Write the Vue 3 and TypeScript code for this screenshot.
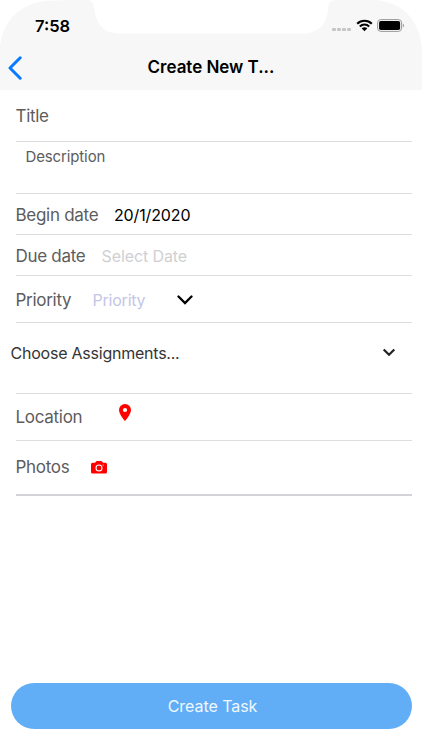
<script setup lang="ts">
import { ref } from 'vue'

const title = ref('Title')
const beginDate = ref('20/1/2020')
const signalDots = [0, 1, 2, 3]
</script>

<template>
  <main class="screen">
    <header class="header">
      <svg class="header-shape" viewBox="0 0 422 90" aria-hidden="true">
        <path d="M0 90V48C2 22 19 4 45 1C58 0 72 0 88 0C92 0 93 3 94 8C96 24 104 33.5 119 33.5H303C318 33.5 327 24 328 9C328 3 330 0 336 0H373C401 1 419 18 422 48V90Z" fill="#f7f7f7" />
      </svg>
      <div class="status">
        <span class="time">7:58</span>
        <div class="indicators">
          <div class="dots"><i v-for="dot in signalDots" :key="dot" /></div>
          <svg class="wifi" width="17" height="13" viewBox="0 0 17 13">
            <path d="M1.2 4.7C5.2.8 11.8.8 15.8 4.7M3.8 7.4C6.5 4.9 10.5 4.9 13.2 7.4" fill="none" stroke="#000" stroke-width="2.1" />
            <path d="M5.6 9.3C7.3 7.8 9.7 7.8 11.4 9.3L8.5 12.3Z" />
          </svg>
          <svg class="battery" width="28" height="13" viewBox="0 0 28 13">
            <rect x=".6" y=".6" width="24" height="11.8" rx="3.2" fill="#f7f7f7" stroke="#999" stroke-width="1" />
            <rect x="2.1" y="2.1" width="21" height="8.8" rx="1.7" />
            <path d="M25.9 4.5Q28.2 6.5 25.9 8.5Z" fill="#999" />
          </svg>
        </div>
      </div>
      <nav class="nav">
        <button class="back" aria-label="Back">
          <svg width="14" height="24" viewBox="0 0 14 24"><path d="M12.2 1.8 2 12 12.2 22.2" fill="none" stroke="#087aff" stroke-width="3" stroke-linecap="round" stroke-linejoin="round" /></svg>
        </button>
        <h1>Create New T...</h1>
      </nav>
    </header>

    <form class="form" @submit.prevent>
      <div class="row title-row"><label>{{ title }}</label></div>
      <div class="row description-row"><label class="description">Description</label></div>
      <div class="row date-row"><label class="begin">Begin date</label><span class="date">{{ beginDate }}</span></div>
      <div class="row date-row"><label class="due">Due date</label><span class="placeholder">Select Date</span></div>
      <div class="row priority-row">
        <label class="priority-label">Priority</label><span class="priority">Priority</span>
        <svg class="chevron" width="16" height="10" viewBox="0 0 16 10"><path d="M1.5 1.5 8 8 14.5 1.5" fill="none" stroke="#000" stroke-width="2.3" stroke-linecap="round" /></svg>
      </div>
      <div class="row assignments-row">
        <span class="assignments">Choose Assignments...</span>
        <svg width="14" height="9" viewBox="0 0 14 9"><path d="M1.7 1.5 7 6.8 12.3 1.5" fill="none" stroke="#222" stroke-width="2.2" /></svg>
      </div>
      <div class="row location-row">
        <label class="location">Location</label>
        <svg class="pin" width="12" height="17" viewBox="0 0 12 17"><path fill="#f00" fill-rule="evenodd" d="M6 0a6 6 0 0 0-6 6C0 10.4 6 17 6 17S12 10.4 12 6A6 6 0 0 0 6 0Zm0 3.9A2.1 2.1 0 1 1 6 8.1 2.1 2.1 0 0 1 6 3.9Z" /></svg>
      </div>
      <div class="row photos-row">
        <label class="photos">Photos</label>
        <svg width="16" height="13" viewBox="0 0 16 13">
          <path fill="#f00" d="M1.5 1.7H4L5 .5Q5.3.1 5.8.1H10.2Q10.7.1 11 .5L12 1.7H14.5Q16 1.7 16 3.2V11Q16 12.5 14.5 12.5H1.5Q0 12.5 0 11V3.2Q0 1.7 1.5 1.7Z" />
          <circle cx="8" cy="7" r="3" fill="none" stroke="#fff" stroke-width="1.1" /><circle cx="12.1" cy="4" r=".6" fill="#fff" />
        </svg>
      </div>
    </form>
    <button class="create">Create Task</button>
  </main>
</template>

<style>
body { margin: 0; background: #fff; }
</style>

<style scoped>
.screen { width: 422px; height: 750px; box-sizing: border-box; padding-bottom: 21px; display: flex; flex-direction: column; overflow: hidden; background: #fff; font-family: Inter, "Liberation Sans", sans-serif; font-size: 17px; line-height: 22px; color: #000; }
.header { position: relative; height: 90px; flex: none; }
.header-shape { position: absolute; inset: 0; width: 422px; height: 90px; }
.status { position: relative; height: 45px; box-sizing: border-box; padding: 6px 17px 0 35px; display: flex; align-items: center; justify-content: space-between; }
.time { font-size: 16.5px; font-weight: 600; }
.indicators { display: flex; align-items: center; }
.dots { display: flex; gap: 1.3px; margin: 8px 5px 0 0; }
.dots i { width: 3.8px; height: 3.8px; border-radius: 1px; background: #c6c6c6; }
.wifi { margin-right: 4px; }
.nav { position: relative; height: 45px; display: flex; align-items: center; }
.back { width: 40px; height: 24px; border: 0; padding: 0 0 0 8px; background: none; text-align: left; line-height: 0; }
h1 { margin: 0 40px 1px 0; flex: 1; font-size: 17px; font-weight: 600; text-align: center; letter-spacing: -.03px; }
.form { padding: 0 10.5px 0 15.5px; }
.row { display: flex; align-items: center; box-sizing: border-box; border-bottom: 1px solid #dedee1; white-space: nowrap; }
label { color: #5c5c5e; flex: none; letter-spacing: -.29px; }
.title-row { height: 52px; }
.description-row { height: 52px; padding: 4px 0 0 10px; align-items: flex-start; }
.description { font-size: 15px; letter-spacing: -.13px; }
.date-row { height: 41px; padding-top: 1px; }
.begin { width: 98.5px; }
.date { font-size: 16px; letter-spacing: -.14px; }
.due { width: 86px; }
.placeholder { font-size: 16px; letter-spacing: -.1px; color: #d0d0d2; }
.priority-row { height: 47px; padding-top: 1px; }
.priority-label { width: 77px; }
.priority { width: 84.5px; font-size: 16px; letter-spacing: -.22px; color: #c4c6e5; }
.assignments-row { height: 71px; padding: 0 15.5px 11px 0; justify-content: space-between; }
.assignments { margin-left: -5px; color: #353535; font-size: 16px; letter-spacing: -.23px; }
.location-row { height: 47px; }
.location { width: 103px; }
.pin { margin-bottom: 9px; }
.photos-row { height: 55px; padding-bottom: 1px; border-bottom: 2px solid #d4d4d8; }
.photos { width: 75px; }
.create { height: 46px; margin: auto 10.5px 0; padding: 0 0 0 3px; border: 0; border-radius: 23px; background: #62aef6; color: #f0f8ff; font: 16px/22px Inter, "Liberation Sans", sans-serif; letter-spacing: -.05px; }
</style>
